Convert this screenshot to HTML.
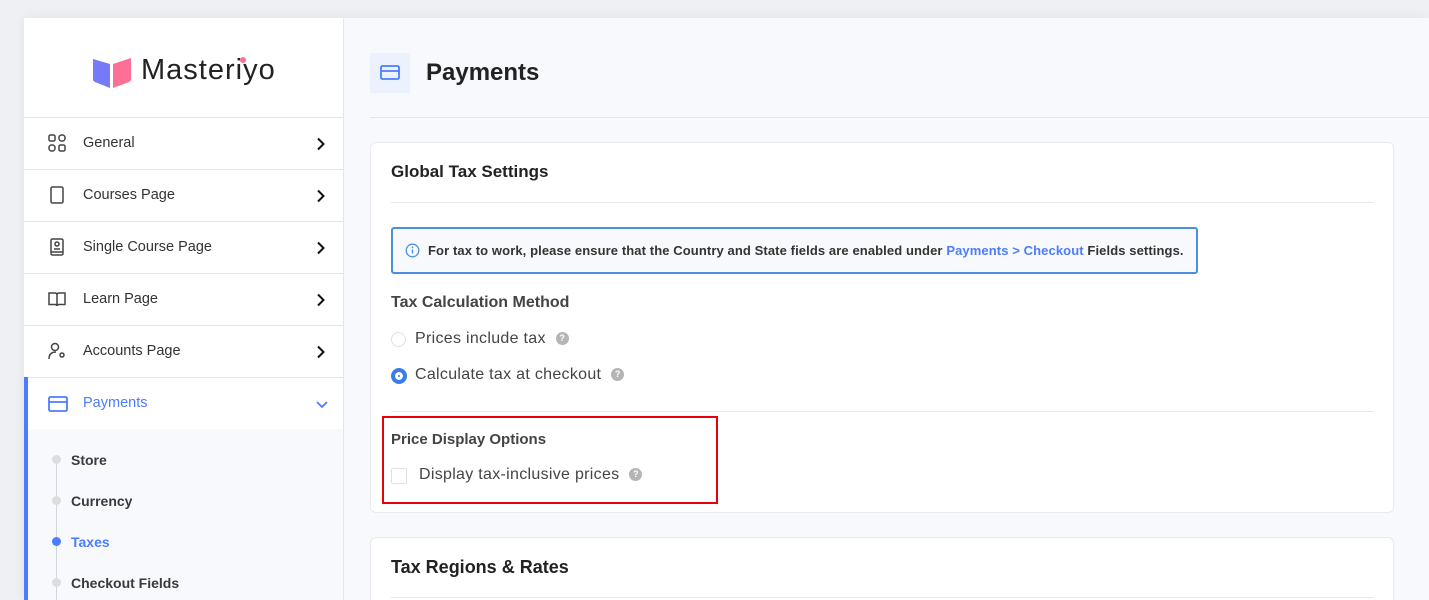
<!DOCTYPE html><html><head><style>
*{box-sizing:border-box;margin:0;padding:0}
html,body{width:1429px;height:600px;overflow:hidden}
body{background:#eef0f3;font-family:"Liberation Sans",sans-serif;position:relative}
.a{position:absolute}
.main{left:24px;top:18px;width:1405px;height:582px;background:#f8f9fc;box-shadow:0 0 12px rgba(0,0,0,.06)}
.side{left:24px;top:18px;width:320px;height:582px;background:#fff;border-right:1px solid #e5e7eb}
.item{position:absolute;left:24px;width:319px;height:52px;border-top:1px solid #e2e5ea;font-size:14.5px;color:#333}
.item span.t{position:absolute;left:59px;top:17px}
.item svg.i{position:absolute;left:24px;top:16px}
.chev{position:absolute;left:292px;top:19px}
.card{background:#fff;border:1px solid #e8eaee;border-radius:6px}
.sub{position:absolute;left:71px;font-size:14px;font-weight:bold;color:#3a3a3a}
.dot{position:absolute;left:52px;width:9px;height:9px;border-radius:50%;background:#ddd}
.q{display:inline-block;width:13px;height:13px;border-radius:50%;background:#b5b5b5;color:#fff;font-size:9px;font-weight:bold;text-align:center;line-height:13px;vertical-align:middle;margin-left:10px}
</style></head><body>
<div class="a main"></div>
<div class="a side"></div>
<svg class="a" style="left:92px;top:55px" width="40" height="34" viewBox="0 0 40 34"><path d="M1 4 L18 9 L18 33 L3 27 Q1 26 1 24Z" fill="#7679f8"/><path d="M21 9 L39 3 L39 24 Q39 26 37 27 L21 33Z" fill="#fe6f96"/></svg>
<div class="a" style="left:141px;top:54px;font-size:29px;color:#222;letter-spacing:1px">Masteriyo</div>
<div class="a" style="left:240px;top:57px;width:6px;height:6px;border-radius:50%;background:#fe6f96"></div>
<div class="item" style="top:117px"><svg class="i" width="18" height="18" viewBox="0 0 18 18" fill="none" stroke="#444" stroke-width="1.5"><rect x="1" y="1" width="6" height="6" rx="1.5"/><rect x="11" y="1" width="6" height="6" rx="2.5"/><rect x="1" y="11" width="6" height="6" rx="2.5"/><rect x="11" y="11" width="6" height="6" rx="1.5"/></svg><span class="t">General</span><svg class="chev" width="10" height="14" viewBox="0 0 10 14"><path d="M2 1.5l5.5 5.5L2 12.5" stroke="#111" stroke-width="2" fill="none"/></svg></div>
<div class="item" style="top:169px"><svg class="i" width="18" height="18" viewBox="0 0 18 18" fill="none" stroke="#444" stroke-width="1.5"><rect x="3" y="1" width="12" height="16" rx="1.5"/></svg><span class="t">Courses Page</span><svg class="chev" width="10" height="14" viewBox="0 0 10 14"><path d="M2 1.5l5.5 5.5L2 12.5" stroke="#111" stroke-width="2" fill="none"/></svg></div>
<div class="item" style="top:221px"><svg class="i" width="18" height="18" viewBox="0 0 18 18" fill="none" stroke="#444" stroke-width="1.5"><rect x="3" y="1" width="12" height="16" rx="1.5"/><circle cx="9" cy="6" r="2"/><path d="M6 11h6M3 14h12"/></svg><span class="t">Single Course Page</span><svg class="chev" width="10" height="14" viewBox="0 0 10 14"><path d="M2 1.5l5.5 5.5L2 12.5" stroke="#111" stroke-width="2" fill="none"/></svg></div>
<div class="item" style="top:273px"><svg class="i" width="18" height="18" viewBox="0 0 18 18" fill="none" stroke="#444" stroke-width="1.5"><path d="M1 3h6q2 0 2 2v11q0-1.5-2-1.5H1zM17 3h-6q-2 0-2 2v11q0-1.5 2-1.5h6z"/></svg><span class="t">Learn Page</span><svg class="chev" width="10" height="14" viewBox="0 0 10 14"><path d="M2 1.5l5.5 5.5L2 12.5" stroke="#111" stroke-width="2" fill="none"/></svg></div>
<div class="item" style="top:325px"><svg class="i" width="18" height="18" viewBox="0 0 18 18" fill="none" stroke="#444" stroke-width="1.5"><circle cx="7" cy="5" r="3.5"/><path d="M1 17q0-7 7-7"/><circle cx="14" cy="13" r="2"/></svg><span class="t">Accounts Page</span><svg class="chev" width="10" height="14" viewBox="0 0 10 14"><path d="M2 1.5l5.5 5.5L2 12.5" stroke="#111" stroke-width="2" fill="none"/></svg></div>
<div class="item" style="top:377px;color:#4d7cfe"><svg class="i" width="20" height="16" viewBox="0 0 20 16" fill="none" stroke="#4d7cfe" stroke-width="1.8" style="top:18px"><rect x="1" y="1" width="18" height="14" rx="1.5"/><path d="M1 6h18"/></svg><span class="t">Payments</span><svg class="a" style="left:291px;top:22px" width="14" height="10" viewBox="0 0 14 10"><path d="M2 2l5 5 5-5" stroke="#4d7cfe" stroke-width="1.8" fill="none"/></svg></div>
<div class="a" style="left:24px;top:377px;width:4px;height:223px;background:#4d7cfe"></div>
<div class="a" style="left:28px;top:429px;width:315px;height:171px;background:#f8f9fc"></div>
<div class="a" style="left:56px;top:460px;width:1px;height:140px;background:#cfd6e0"></div>
<div class="dot" style="top:455px"></div><div class="sub" style="top:452px">Store</div>
<div class="dot" style="top:496px"></div><div class="sub" style="top:493px">Currency</div>
<div class="dot" style="top:537px;background:#4d7cfe"></div><div class="sub" style="top:534px;color:#4d7cfe">Taxes</div>
<div class="dot" style="top:578px"></div><div class="sub" style="top:575px">Checkout Fields</div>
<div class="a" style="left:370px;top:53px;width:40px;height:40px;background:#ebf2fe"></div>
<svg class="a" style="left:380px;top:65px" width="20" height="16" viewBox="0 0 20 16" fill="none" stroke="#4d7cfe" stroke-width="1.8"><rect x="1" y="1" width="18" height="13" rx="1.5"/><path d="M1 6h18"/></svg>
<div class="a" style="left:426px;top:59px;font-size:24px;font-weight:bold;color:#222">Payments</div>
<div class="a" style="left:370px;top:117px;width:1059px;height:1px;background:#e3e6ea"></div>
<div class="a card" style="left:370px;top:142px;width:1024px;height:371px"></div>
<div class="a" style="left:391px;top:162px;font-size:17px;font-weight:bold;color:#222">Global Tax Settings</div>
<div class="a" style="left:391px;top:202px;width:982px;height:1px;background:#e6e8ec"></div>
<div class="a" style="left:391px;top:227px;width:807px;height:47px;border:2px solid #4a90e2;border-radius:3px;background:#f8f9fc"></div>
<svg class="a" style="left:405px;top:243px" width="15" height="15" viewBox="0 0 15 15"><circle cx="7.5" cy="7.5" r="6.3" fill="none" stroke="#4a90e2" stroke-width="1.3"/><path d="M7.5 6.5v4" stroke="#4a90e2" stroke-width="1.4"/><circle cx="7.5" cy="4.4" r=".9" fill="#4a90e2"/></svg>
<div class="a" style="left:428px;top:243px;font-size:13px;font-weight:bold;color:#333;white-space:nowrap;letter-spacing:.1px">For tax to work, please ensure that the Country and State fields are enabled under <span style="color:#4d7cfe">Payments &gt; Checkout</span> Fields settings.</div>
<div class="a" style="left:391px;top:294px;font-size:16px;font-weight:bold;color:#444">Tax Calculation Method</div>
<div class="a" style="left:391px;top:332px;width:15px;height:15px;border-radius:50%;border:1.5px solid #dde1e6"></div>
<div class="a" style="left:415px;top:330px;font-size:16px;color:#444;letter-spacing:.3px">Prices include tax<span class="q">?</span></div>
<div class="a" style="left:391px;top:368px;width:16px;height:16px;border-radius:50%;background:#3b7de6;border:4.5px solid #3b7de6;box-shadow:inset 0 0 0 3px #fff"></div>
<div class="a" style="left:415px;top:366px;font-size:16px;color:#444;letter-spacing:.3px">Calculate tax at checkout<span class="q">?</span></div>
<div class="a" style="left:391px;top:411px;width:982px;height:1px;background:#e6e8ec"></div>
<div class="a" style="left:382px;top:416px;width:336px;height:88px;border:2px solid #e8000b"></div>
<div class="a" style="left:391px;top:431px;font-size:15px;font-weight:bold;color:#444">Price Display Options</div>
<div class="a" style="left:391px;top:468px;width:16px;height:16px;border:1.5px solid #dde1e6;border-radius:2px"></div>
<div class="a" style="left:419px;top:466px;font-size:16px;color:#444;letter-spacing:.3px">Display tax-inclusive prices<span class="q">?</span></div>
<div class="a card" style="left:370px;top:537px;width:1024px;height:63px;border-bottom:none;border-radius:6px 6px 0 0"></div>
<div class="a" style="left:391px;top:557px;font-size:18px;font-weight:bold;color:#222">Tax Regions &amp; Rates</div>
<div class="a" style="left:391px;top:597px;width:982px;height:1px;background:#e6e8ec"></div>
</body></html>
